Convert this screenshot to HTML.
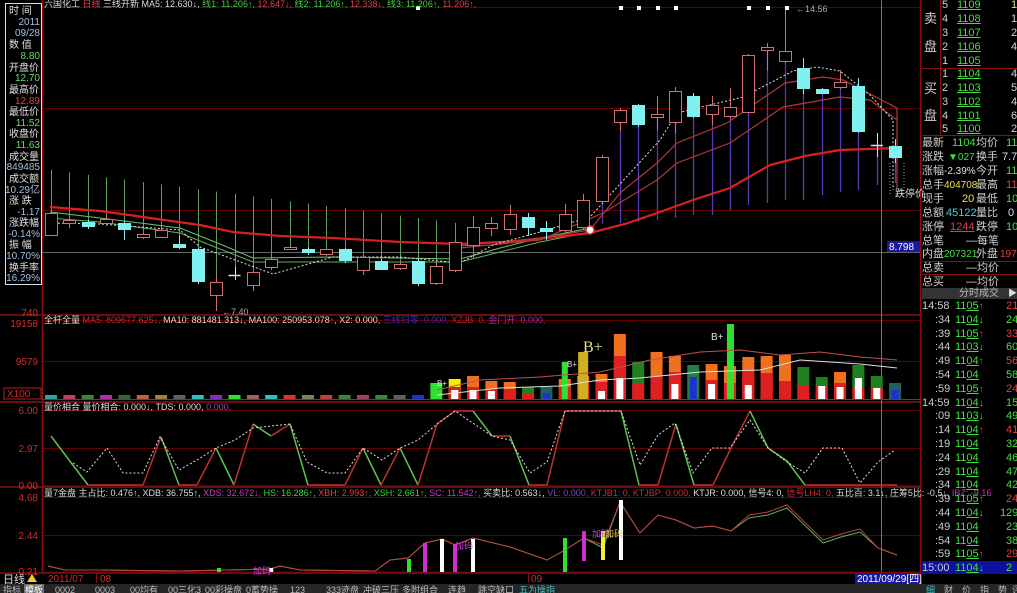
<!DOCTYPE html>
<html><head><meta charset="utf-8">
<style>
*{margin:0;padding:0}
body{width:1017px;height:593px;background:#000;overflow:hidden;position:relative;font-family:"Liberation Sans","Noto Sans CJK SC",sans-serif;}
svg{position:absolute;left:0;top:0}
#rp{position:absolute;left:922px;top:0;width:95px;height:583px;overflow:hidden;font-family:"Liberation Sans","Noto Sans CJK SC",sans-serif}
.r{position:absolute;white-space:nowrap;font-size:11px;line-height:13px;color:#d0d0d0}
.g{color:#40e040}.rd{color:#e04040}.y{color:#f0e040}.c{color:#40d0e0}.w{color:#e0e0e0}
.u{text-decoration:underline}
.v{position:absolute;right:0;text-align:right}
</style></head><body>
<svg id="s" width="1017" height="593" xmlns="http://www.w3.org/2000/svg" font-family="Liberation Sans, Noto Sans CJK SC, sans-serif">
<g stroke="#600" stroke-width="1">
<line x1="42" y1="7.5" x2="920" y2="7.5"/>
<line x1="42" y1="108.5" x2="920" y2="108.5"/>
<line x1="42" y1="210.5" x2="920" y2="210.5"/>
<line x1="42" y1="320.5" x2="920" y2="320.5"/>
<line x1="42" y1="361.5" x2="920" y2="361.5"/>
<line x1="42" y1="410.5" x2="920" y2="410.5"/>
<line x1="42" y1="448.5" x2="920" y2="448.5"/>
<line x1="42" y1="497.5" x2="920" y2="497.5"/>
<line x1="42" y1="535.5" x2="920" y2="535.5"/>
</g>
<g stroke="#8a1010" stroke-width="1.5">
<line x1="0" y1="315" x2="920" y2="315"/>
<line x1="0" y1="402" x2="920" y2="402"/>
<line x1="0" y1="487" x2="920" y2="487"/>
<line x1="0" y1="573" x2="920" y2="573"/>
<line x1="42.5" y1="0" x2="42.5" y2="573"/>
<line x1="920.5" y1="0" x2="920.5" y2="593"/>
</g>
<line x1="42" y1="252.5" x2="920" y2="252.5" stroke="#666" stroke-width="1"/>
<line x1="881.5" y1="0" x2="881.5" y2="573" stroke="#777" stroke-width="1"/>
<line x1="42" y1="399.5" x2="920" y2="399.5" stroke="#b02020" stroke-width="1"/>
<line x1="42" y1="485.5" x2="920" y2="485.5" stroke="#600" stroke-width="1"/>
<line x1="42" y1="572" x2="920" y2="572" stroke="#600" stroke-width="1"/>
<g id="gen"></g>
<g font-size="10" fill="#c83030" text-anchor="end">
<text x="38" y="316">740</text>
<text x="38" y="327">19158</text>
<text x="38" y="365">9579</text>
<text x="38" y="414">6.00</text>
<text x="38" y="452">2.97</text>
<text x="38" y="489">0.00</text>
<text x="38" y="501">4.68</text>
<text x="38" y="539">2.44</text>
<text x="38" y="575">0.21</text>
</g>
<rect x="4" y="388" width="37" height="11" fill="none" stroke="#b02020"/>
<text x="7" y="397" font-size="10" fill="#c83030">X100</text>
<rect x="5.5" y="3.5" width="36" height="281" fill="#000" stroke="#ddd" stroke-width="1"/>
<g font-size="10" fill="#e0e0e0">
<text x="9" y="14">时  间</text>
<text x="40" y="25" text-anchor="end" fill="#a0c0e0">2011</text>
<text x="40" y="36" text-anchor="end" fill="#a0c0e0">09/28</text>
<text x="9" y="48">数  值</text>
<text x="40" y="59" text-anchor="end" fill="#60e060">8.80</text>
<text x="9" y="71">开盘价</text>
<text x="40" y="81" text-anchor="end" fill="#60e060">12.70</text>
<text x="9" y="93">最高价</text>
<text x="40" y="104" text-anchor="end" fill="#e04040">12.89</text>
<text x="9" y="115">最低价</text>
<text x="40" y="126" text-anchor="end" fill="#60e060">11.52</text>
<text x="9" y="137">收盘价</text>
<text x="40" y="148" text-anchor="end" fill="#60e060">11.63</text>
<text x="9" y="160">成交量</text>
<text x="40" y="170" text-anchor="end" fill="#a0c0e0">849485</text>
<text x="9" y="182">成交额</text>
<text x="40" y="193" text-anchor="end" fill="#a0c0e0">10.29亿</text>
<text x="9" y="204">涨  跌</text>
<text x="40" y="215" text-anchor="end" fill="#a0c0e0">-1.17</text>
<text x="9" y="226">涨跌幅</text>
<text x="40" y="237" text-anchor="end" fill="#a0c0e0">-0.14%</text>
<text x="9" y="248">振  幅</text>
<text x="40" y="259" text-anchor="end" fill="#a0c0e0">10.70%</text>
<text x="9" y="271">换手率</text>
<text x="40" y="281" text-anchor="end" fill="#a0c0e0">16.29%</text>
</g>
<text x="44" y="7" font-size="9" fill="#ddd">六国化工 <tspan fill="#e04040">日线</tspan> 三线开新 MA5: 12.630↓, <tspan fill="#40d040">线1: 11.206↑,</tspan> <tspan fill="#e04040">12.647↓,</tspan> <tspan fill="#40d040">线2: 11.206↑,</tspan> <tspan fill="#e04040">12.338↓,</tspan> <tspan fill="#40d040">线3: 11.206↑,</tspan> <tspan fill="#e04040">11.206↑,</tspan></text>
<text x="44" y="323" font-size="9" fill="#ddd">全杆全量 <tspan fill="#c03030">MA5: 809677.625↓,</tspan> MA10: 881481.313↓, MA100: 250953.078<tspan fill="#e04040">↑</tspan>, X2: 0.000, <tspan fill="#3030c0">三线归零: 0.000,</tspan> <tspan fill="#a03030">XZJB: 0,</tspan> <tspan fill="#a030a0">金门开: 0.000,</tspan></text>
<text x="44" y="410" font-size="9" fill="#ddd">量价相合 量价相合: 0.000↓, TDS: 0.000, <tspan fill="#a040c0">0.000,</tspan></text>
<text x="44" y="496" font-size="9" fill="#ddd">量7金盘 主占比: 0.476↑, XDB: 36.755↑, <tspan fill="#c040c0">XDS: 32.672↓,</tspan> <tspan fill="#40d040">HS: 16.286↑,</tspan> <tspan fill="#e04040">XBH: 2.993↑,</tspan> <tspan fill="#40d040">XSH: 2.661↑,</tspan> <tspan fill="#c040c0">SC: 11.542↑,</tspan> 买卖比: 0.563↓, <tspan fill="#8040c0">VL: 0.000,</tspan> <tspan fill="#c03030">KTJB1: 0, KTJBP: 0.000,</tspan> KTJR: 0.000, 信号4: 0, <tspan fill="#c03030">信号LH4: 0,</tspan> 五比百: 3.1↓, 庄筹5比: -0.5↓, <tspan fill="#c040c0">IBZ: -9.16</tspan></text>
<text x="796" y="12" font-size="9" fill="#aaa">←14.56</text>
<text x="222" y="315" font-size="9" fill="#aaa">←7.40</text>
<text x="895" y="197" font-size="10" fill="#ddd">跌停价</text>
<rect x="887" y="241" width="33" height="11" fill="#1818a0"/>
<text x="889" y="250" font-size="10" fill="#fff">8.798</text>
<text x="583" y="352" font-size="16" fill="#e8e080" font-family="Liberation Serif, serif">B+</text>
<text x="711" y="340" font-size="10" fill="#e0e0e0">B+</text>
<text x="437" y="386" font-size="8" fill="#e0e0e0">B+</text>
<text x="567" y="367" font-size="8" fill="#e0e0e0">B+</text>
<text x="253" y="574" font-size="9" fill="#d040d0">加码</text>
<text x="455" y="549" font-size="9" fill="#d040d0">加码</text>
<text x="592" y="537" font-size="9" fill="#d040d0">加码</text>
<text x="605" y="537" font-size="9" fill="#e0d040">加码</text>
<text x="3" y="583" font-size="11" fill="#ddd">日线</text>
<polygon points="27,582 32,574 37,582" fill="#f0d020"/>
<text x="48" y="582" font-size="10" fill="#c83030">2011/07</text>
<line x1="96.5" y1="573" x2="96.5" y2="583" stroke="#8a1010"/>
<text x="100" y="582" font-size="10" fill="#c83030">08</text>
<line x1="528.5" y1="573" x2="528.5" y2="583" stroke="#8a1010"/>
<text x="531" y="582" font-size="10" fill="#c83030">09</text>
<rect x="855" y="574" width="65" height="10" fill="#1818a0"/>
<text x="857" y="582" font-size="10" fill="#fff">2011/09/29[四]</text>
<rect x="0" y="584" width="1017" height="9" fill="#262626"/>
<g font-size="9" fill="#bbb">
<text x="3" y="593">指标</text>
<rect x="24" y="584" width="20" height="9" fill="#707070"/><text x="25" y="593" fill="#fff">模板</text>
<text x="55" y="593">0002</text><text x="95" y="593">0003</text><text x="130" y="593">00均有</text><text x="168" y="593">00三化3</text><text x="205" y="593">00彩操盘</text><text x="246" y="593">0蓄势操</text><text x="290" y="593">123</text><text x="326" y="593">333迹盘</text><text x="363" y="593">冲破三压</text><text x="402" y="593">多附组合</text><text x="448" y="593">连趋</text><text x="478" y="593">跳空缺口</text><text x="519" y="593" fill="#40c0c0">五为操指</text>
<text x="926" y="593" fill="#40c0c0">细</text><text x="944" y="593">财</text><text x="962" y="593">价</text><text x="980" y="593">指</text><text x="998" y="593">势</text><text x="1012" y="593">评</text>
</g>
</svg>

<div id="rp">
<div style="position:absolute;left:0;top:68px;width:95px;border-top:1px solid #8a1010"></div>
<div style="position:absolute;left:0;top:135px;width:95px;border-top:1px solid #8a1010"></div>
<div style="position:absolute;left:0;top:261px;width:95px;border-top:1px solid #8a1010"></div>
<div style="position:absolute;left:0;top:274px;width:95px;border-top:1px solid #8a1010"></div>
<div style="position:absolute;left:18px;top:0;height:135px;border-left:1px solid #8a1010"></div>
<div class="r" style="left:2px;top:12px;font-size:13px">卖</div>
<div class="r" style="left:2px;top:40px;font-size:13px">盘</div>
<div class="r" style="left:2px;top:82px;font-size:13px">买</div>
<div class="r" style="left:2px;top:109px;font-size:13px">盘</div>
<div class="r" style="left:20px;top:-1px">5</div><div class="r g u" style="left:35px;top:-1px">1109</div><div class="r y" style="left:89px;top:-1px">1</div>
<div class="r" style="left:20px;top:13px">4</div><div class="r g u" style="left:35px;top:13px">1108</div><div class="r" style="left:89px;top:13px">1</div>
<div class="r" style="left:20px;top:27px">3</div><div class="r g u" style="left:35px;top:27px">1107</div><div class="r" style="left:89px;top:27px">2</div>
<div class="r" style="left:20px;top:41px">2</div><div class="r g u" style="left:35px;top:41px">1106</div><div class="r" style="left:89px;top:41px">4</div>
<div class="r" style="left:20px;top:55px">1</div><div class="r g u" style="left:35px;top:55px">1105</div>
<div class="r" style="left:20px;top:68px">1</div><div class="r g u" style="left:35px;top:68px">1104</div><div class="r" style="left:89px;top:68px">4</div>
<div class="r" style="left:20px;top:82px">2</div><div class="r g u" style="left:35px;top:82px">1103</div><div class="r" style="left:89px;top:82px">5</div>
<div class="r" style="left:20px;top:96px">3</div><div class="r g u" style="left:35px;top:96px">1102</div><div class="r" style="left:89px;top:96px">4</div>
<div class="r" style="left:20px;top:110px">4</div><div class="r g u" style="left:35px;top:110px">1101</div><div class="r" style="left:89px;top:110px">6</div>
<div class="r" style="left:20px;top:123px">5</div><div class="r g u" style="left:35px;top:123px">1100</div><div class="r" style="left:89px;top:123px">2</div>

<div class="r" style="left:0;top:137px;width:120px">最新<span class="g" style="position:absolute;left:30px">1104</span><span style="position:absolute;left:54px">均价</span><span class="g" style="position:absolute;left:84px">11</span></div>
<div class="r" style="left:0;top:151px;width:120px">涨跌<span class="g" style="position:absolute;left:26px;font-size:10px">▼027</span><span style="position:absolute;left:54px">换手</span><span class="w" style="position:absolute;left:80px">7.7</span></div>
<div class="r" style="left:0;top:165px;width:120px">涨幅<span class="w" style="position:absolute;left:22px;font-size:10px">-2.39%</span><span style="position:absolute;left:54px">今开</span><span class="g" style="position:absolute;left:84px">11</span></div>
<div class="r" style="left:0;top:179px;width:120px">总手<span class="y" style="position:absolute;left:22px;font-size:10px">404708</span><span style="position:absolute;left:54px">最高</span><span class="rd" style="position:absolute;left:84px">11</span></div>
<div class="r" style="left:0;top:193px;width:120px">现手<span class="y" style="position:absolute;left:40px">20</span><span style="position:absolute;left:54px">最低</span><span class="g" style="position:absolute;left:84px">10</span></div>
<div class="r" style="left:0;top:207px;width:120px">总额<span class="c" style="position:absolute;left:24px">45122</span><span style="position:absolute;left:54px">量比</span><span class="w" style="position:absolute;left:86px">0</span></div>
<div class="r" style="left:0;top:221px;width:120px">涨停<span class="rd u" style="position:absolute;left:28px">1244</span><span style="position:absolute;left:54px">跌停</span><span class="g" style="position:absolute;left:84px">10</span></div>
<div class="r" style="left:0;top:235px;width:120px">总笔<span style="position:absolute;left:44px">—每笔</span></div>
<div class="r" style="left:0;top:248px;width:120px">内盘<span class="g" style="position:absolute;left:22px;font-size:10px">207321</span><span style="position:absolute;left:54px">外盘</span><span class="rd" style="position:absolute;left:78px;font-size:10px">1973</span></div>
<div class="r" style="left:0;top:262px;width:120px">总卖<span style="position:absolute;left:44px">—均价</span></div>
<div class="r" style="left:0;top:276px;width:120px">总买<span style="position:absolute;left:44px">—均价</span></div>
<div style="position:absolute;left:0;top:288px;width:95px;height:11px;background:#333"></div>
<div class="r" style="left:37px;top:287px;font-size:10px;color:#bbb">分时成交</div>
<div class="r" style="left:86px;top:287px;font-size:9px;color:#ddd">▶</div>
<div id="ticks"></div>
</div>

<script>
var NS="http://www.w3.org/2000/svg",G=document.getElementById("gen");
function el(n,a){var e=document.createElementNS(NS,n);for(var k in a)e.setAttribute(k,a[k]);G.appendChild(e);return e;}
function X(i){return 51+18.35*i;}
function pl(pts,c,w,d){var a={points:pts.map(function(p){return p.join(",")}).join(" "),fill:"none",stroke:c,"stroke-width":w||1};if(d)a["stroke-dasharray"]=d;el("polyline",a);}
var C=[[213,235,210,236,'r'],[220,223,215,228,'r'],[222,226,220,229,'c'],[219,223,216,226,'r'],[223,229,221,240,'c'],[234,237,232,239,'r'],[230,237,228,238,'r'],[244,247,236,249,'c'],[249,281,248,284,'c'],[282,295,275,311,'r'],[275,276,267,280,'x'],[272,285,270,291,'r'],[259,267,257,270,'r'],[247,249,246,250,'r'],[249,252,247,255,'c'],[249,254,248,256,'r'],[249,260,248,263,'c'],[257,270,255,275,'r'],[261,269,259,270,'c'],[264,268,262,270,'r'],[261,283,259,286,'c'],[266,283,263,285,'r'],[242,270,238,272,'r'],[227,245,216,258,'r'],[223,228,217,236,'r'],[214,229,205,235,'r'],[217,227,213,236,'c'],[228,231,221,240,'c'],[214,230,204,233,'r'],[200,227,194,229,'r'],[157,201,155,203,'r'],[110,122,108,131,'r'],[105,124,104,127,'c'],[114,117,96,130,'r'],[91,122,87,133,'r'],[96,116,93,118,'c'],[105,114,96,125,'r'],[107,116,88,118,'r'],[55,112,54,113,'r'],[47,50,43,71,'r'],[51,61,9,63,'r'],[68,88,58,94,'c'],[89,93,88,94,'c'],[82,87,70,89,'r'],[86,131,78,133,'c'],[145,146,133,157,'x'],[146,157,139,163,'c']];
for(var i=0;i<=22;i++){var x=Math.round(X(i))+.5;el("line",{x1:x,y1:170+i*2.4,x2:x,y2:C[i][0],stroke:"#5ca05c","stroke-width":1});}
var pb=[];pb[28]=223;pb[29]=225;pb[30]=224;pb[31]=223;pb[32]=222;pb[33]=220;pb[34]=218;pb[35]=215;pb[36]=215;pb[37]=210;pb[38]=205;pb[39]=203;pb[40]=200;pb[41]=200;pb[42]=195;pb[43]=192;pb[44]=190;pb[45]=185;pb[46]=183;
for(var i=28;i<=46;i++){var x=Math.round(X(i))+.5;el("line",{x1:x,y1:C[i][1],x2:x,y2:pb[i],stroke:"#5a3ab0","stroke-width":1.3});}
pl([[50,212],[100,218],[180,228],[220,244],[253,258],[333,257],[400,258],[460,259],[500,248],[540,238],[590,228]],"#70c070",1);
pl([[50,218],[100,222],[180,233],[220,249],[253,262],[333,262],[400,262],[460,262],[500,252],[540,242],[590,232]],"#60b060",1);
pl([[50,207],[100,211],[150,218],[200,225],[233,232],[280,236],[333,238],[400,242],[460,244],[520,241],[590,233],[625,224],[660,212],[693,200],[730,188],[770,165],[805,156],[840,150],[897,148]],"#d82020",2.2);
pl([[460,246],[540,238],[590,230],[620,193],[657,163],[677,143],[727,123],[785,83],[823,77],[843,80],[897,108],[897,188]],"#b03838",1.2);
pl([[460,248],[540,240],[603,213],[657,180],[677,163],[730,143],[783,107],[840,97],[870,100],[897,120]],"#b03838",1.2);
pl([[50,223],[100,224],[180,230],[200,247],[273,274],[333,257],[400,257],[460,263],[493,245],[540,232],[590,217],[660,140],[677,113],[743,97],[793,71],[817,67],[840,71],[870,95],[893,120],[893,190]],"#ddd",1,"2,2");
C.forEach(function(c,i){var x=X(i),xr=Math.round(x)+.5;
 var col=c[4]=='r'?"#d07070":(c[4]=='c'?"#80f0f0":"#e0e0e0");
 el("line",{x1:xr,y1:c[2],x2:xr,y2:c[3],stroke:col,"stroke-width":1});
 if(c[4]=='r')el("rect",{x:Math.round(x-6)+.5,y:c[0]+.5,width:12,height:c[1]-c[0],fill:"#000",stroke:col,"stroke-width":1});
 else if(c[4]=='c')el("rect",{x:Math.round(x-6),y:c[0],width:13,height:c[1]-c[0]+1,fill:col});
 else el("line",{x1:x-6,y1:c[0]+.5,x2:x+6,y2:c[0]+.5,stroke:col,"stroke-width":1.5});
});
el("circle",{cx:590,cy:230,r:4,fill:"#fff",stroke:"#e04040","stroke-width":1.5});
[418,621,639,658,676,749,768,787].forEach(function(x){el("rect",{x:x-2,y:6,width:4,height:4,fill:"#fff"});});
el("line",{x1:890,y1:163,x2:890,y2:194,stroke:"#aaa","stroke-dasharray":"1,2"});
el("line",{x1:904,y1:163,x2:904,y2:194,stroke:"#aaa","stroke-dasharray":"1,2"});
var cols=["#30a0a0","#c04060","#408040","#b030a0","#406040","#c06040","#a08040","#606060","#30c0c0","#8030c0","#30e030","#a06060","#30c0c0","#e03030","#808060","#c04040","#408040","#a04060","#408040","#606060","#2030c0"];
for(var i=0;i<=20;i++){var x=X(i);el("rect",{x:x-6,y:395,width:12,height:4,fill:cols[i]});}
var V={21:[[383,"#30e030"]],22:[[379,"#f0f000"],[387,"#e02020"],[390,"#fff"]],23:[[376,"#f07020"],[387,"#e02020"],[390,"#fff"]],24:[[381,"#f07020"],[389,"#e02020"],[391,"#fff"]],25:[[382,"#f07020"],[389,"#e02020"]],26:[[387,"#208020"],[393,"#e02020"]],27:[[387,"#206060"],[393,"#2030d0"]],28:[[379,"#f07020"],[387,"#e02020"]],29:[[376,"#f07020"],[382,"#e02020"],[391,"#fff"]],30:[[374,"#f07020"],[382,"#e02020"],[391,"#fff"]],31:[[334,"#f07020"],[356,"#e02020"],[378,"#fff"]],32:[[362,"#208020"],[384,"#e02020"]],33:[[352,"#f07020"],[376,"#e02020"]],34:[[356,"#f07020"],[372,"#e02020"],[384,"#fff"]],35:[[365,"#208040"],[377,"#2030d0"]],36:[[364,"#f07020"],[380,"#e02020"],[384,"#fff"]],37:[[366,"#f07020"],[383,"#e02020"]],38:[[357,"#f07020"],[371,"#e02020"],[385,"#fff"]],39:[[356,"#f07020"],[373,"#e02020"]],40:[[355,"#f07020"],[381,"#e02020"]],41:[[367,"#208020"],[386,"#e02020"]],42:[[377,"#208020"],[386,"#e02020"],[386,"#fff"]],43:[[372,"#f07020"],[383,"#e02020"],[387,"#fff"]],44:[[365,"#208020"],[387,"#e02020"],[378,"#fff"]],45:[[376,"#208020"],[387,"#e02020"],[388,"#fff"]],46:[[383,"#206060"],[390,"#2030d0"]]};
for(var k in V){var x=X(+k);V[k].forEach(function(b){var w=b[1]=="#fff"||b[1]=="#2030d0"?7:12;el("rect",{x:x-w/2,y:b[0],width:w,height:399-b[0],fill:b[1]});});}
el("rect",{x:X(21)-3,y:383,width:6,height:16,fill:"#30e030"});
el("rect",{x:X(28)-3,y:362,width:6,height:37,fill:"#30e030"});
el("rect",{x:X(29)-5,y:352,width:10,height:47,fill:"#d0b020"});
el("rect",{x:X(37)-3,y:324,width:7,height:75,fill:"#30e030"});
pl([[437,390],[480,380],[540,377],[600,372],[650,360],[700,352],[740,350],[780,355],[820,352],[860,357],[897,360]],"#c05050",1);
pl([[437,395],[500,388],[560,386],[600,380],[640,378],[700,372],[760,370],[800,360],[860,364],[897,368]],"#ddd",1);
var M=[[51,436],[69,460],[88,485],[106,485],[124,485],[143,485],[161,437],[179,485],[197,485],[216,448],[234,485],[253,424],[271,436],[290,424],[308,485],[326,485],[345,485],[363,448],[381,485],[400,448],[418,485],[437,424],[455,411],[473,411],[492,436],[510,436],[529,485],[547,485],[565,411],[584,411],[603,411],[621,411],[639,485],[658,485],[676,424],[694,485],[713,485],[731,448],[750,411],[768,448],[787,461],[805,485],[823,485],[897,485]];
for(var i=1;i<M.length;i++){var a=M[i-1],b=M[i];el("line",{x1:a[0],y1:a[1],x2:b[0],y2:b[1],stroke:b[1]>a[1]?"#60c050":"#c03030","stroke-width":1.5});}
pl([[73,463],[87,472],[107,448],[123,473],[143,473],[160,437],[179,470],[197,460],[216,448],[235,440],[253,428],[290,424],[307,462],[327,473],[345,473],[363,448],[382,460],[400,448],[418,440],[437,424],[455,411],[492,436],[510,440],[530,473],[547,462],[565,411],[621,411],[640,465],[658,435],[675,423],[693,473],[712,448],[730,448],[750,420],[768,448],[787,462],[805,473],[823,448],[842,448],[860,483],[878,462],[895,450]],"#ddd",1,"2,2");
var B=[[48,566],[65,570],[100,570],[180,571],[270,569],[280,566],[300,570],[375,571],[390,560],[408,558],[425,543],[442,539],[455,545],[473,538],[510,547],[547,560],[565,550],[584,538],[603,548],[620,502],[640,533],[658,515],[676,520],[694,528],[713,526],[731,531],[749,518],[768,515],[787,508],[823,543],[841,537],[860,532],[878,548],[897,555]];
pl(B,"#5cb05c",1);
pl(B.map(function(p,i){return [p[0],p[1]-(i>25&&i<32?3:(i==18?3:0))]}),"#c04040",1);
[[409,559,"#30e030"],[425,543,"#d030d0"],[442,539,"#fff"],[455,544,"#d030d0"],[473,539,"#fff"],[565,538,"#30e030"],[584,531,"#d030d0",561],[603,531,"#f0f040",560],[621,500,"#fff",560]].forEach(function(b){el("rect",{x:b[0]-2,y:b[1],width:4,height:(b[3]||572)-b[1],fill:b[2]});});
el("rect",{x:X(12)-2,y:568,width:4,height:4,fill:"#fff"});el("rect",{x:217,y:568,width:4,height:4,fill:"#30e030"});
var T=["14:58",":34",":39",":44",":49",":54",":59","14:59",":09",":14",":19",":24",":29",":34",":39",":44",":49",":54",":59","15:00"];
var P=["1105↑","1104↓","1105↑","1103↓","1104↑","1104","1105↑","1104↓","1103↓","1104↑","1104","1104","1104","1104","1105↑","1104↓","1104","1104","1105↑","1104↓"];
var Vv=["21","24","33","60","56","58","24","15","49","41","32","46","47","42","24","129","23","38","29","2"];
var h="";for(var i=0;i<20;i++){var y=300+i*13.8;var up=P[i].indexOf("↑")>0,dn=P[i].indexOf("↓")>0;
if(i==19)h+='<div style="position:absolute;left:0;top:'+(y-1)+'px;width:95px;height:13px;background:#1010a0"></div>';
var p=P[i].replace("↑","").replace("↓","");
h+='<div class="r" style="left:'+(T[i].length>3?0:13)+'px;top:'+y+'px;color:#ccc;font-size:11px">'+T[i]+'</div><div class="r g" style="left:33px;top:'+y+'px">'+p.slice(0,2)+'<span class="u">'+p.slice(2)+'</span>'+(up?'<span class="rd" style="font-size:10px">↑</span>':'')+(dn?'<span style="font-size:10px">↓</span>':'')+'</div><div class="r '+(up?'rd':'g')+'" style="left:'+(Vv[i].length>2?78:84)+'px;top:'+y+'px">'+Vv[i]+'</div>';}
document.getElementById("ticks").innerHTML=h;
</script>
</body></html>
